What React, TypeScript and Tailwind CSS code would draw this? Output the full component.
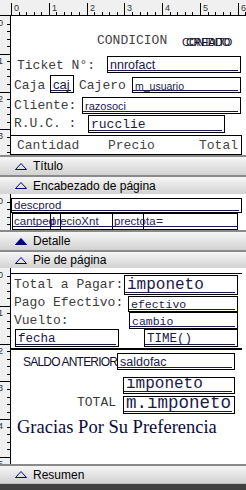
import React from 'react';

const INCH = 37.8;

const mono = "font-['Liberation_Mono',monospace]";
const sans = "font-['Liberation_Sans',Arial,sans-serif]";

const TopRuler = () => {
  const marks: React.ReactNode[] = [];
  for (let i = 0; i < 7; i++) {
    const x = Math.round(11 + i * INCH);
    marks.push(<line key={`m${i}`} x1={x + 0.5} y1={3} x2={x + 0.5} y2={15} stroke="#000" />);
    marks.push(
      <text key={`t${i}`} x={x + 3} y={11} fontSize={9} fill="#333" fontFamily="Liberation Sans, sans-serif">
        {i}
      </text>
    );
    for (let k = 1; k < 5; k++) {
      const xx = Math.round(11 + i * INCH + (k * INCH) / 5) + 0.5;
      marks.push(<line key={`k${i}-${k}`} x1={xx} y1={12} x2={xx} y2={15} stroke="#000" />);
    }
  }
  return (
    <svg width={246} height={16} className="block bg-[#f0f0f0]">
      {marks}
      <line x1={0} y1={15.5} x2={246} y2={15.5} stroke="#000" />
    </svg>
  );
};

const LeftRuler = ({ height }: { height: number }) => {
  const marks: React.ReactNode[] = [];
  for (let i = 0; i * INCH < height; i++) {
    const y = Math.round(i * INCH);
    if (i > 0) marks.push(<line key={`m${i}`} x1={0} y1={y + 0.5} x2={10} y2={y + 0.5} stroke="#000" />);
    marks.push(
      <text key={`t${i}`} x={-2} y={y + 10} fontSize={9} fill="#333" fontFamily="Liberation Sans, sans-serif">
        {i}
      </text>
    );
    for (let k = 1; k < 5; k++) {
      const yy = Math.round(i * INCH + (k * INCH) / 5) + 0.5;
      marks.push(<line key={`k${i}-${k}`} x1={7} y1={yy} x2={10} y2={yy} stroke="#000" />);
    }
  }
  return (
    <svg width={11} height={height} className="block shrink-0 bg-[#f0f0f0]">
      {marks}
      <line x1={10.5} y1={0} x2={10.5} y2={height} stroke="#000" />
    </svg>
  );
};

const BandBar = ({ label, filled, className }: { label: string; filled?: boolean; className: string }) => (
  <div
    className={`flex items-center gap-[6px] pl-[15px] border-t-2 border-[#8a8a8a] bg-linear-to-b from-[#f6f6f6] to-[#d2d2d2] ${className}`}
  >
    <svg width={12} height={7} className="block">
      <polygon
        points="6,0.5 11.5,6.5 0.5,6.5"
        fill={filled ? '#000080' : 'none'}
        stroke="#000080"
        strokeWidth={1}
      />
    </svg>
    <span className={`${sans} text-[12px] leading-none text-black`}>{label}</span>
  </div>
);

// report field: framed box with the expression name and its underline
const Field = ({ className, text, textClass }: { className: string; text: string; textClass: string }) => (
  <div className={`absolute border border-black overflow-hidden ${className}`}>
    <span className={`absolute left-[2px] bottom-[1px] leading-none whitespace-nowrap text-[#1a1a4a] ${textClass}`}>
      {text}
    </span>
    <div className="absolute left-0 right-[2px] bottom-[1px] h-px bg-[#1a1a4a]" />
  </div>
);

const Label = ({ className, children }: { className: string; children: React.ReactNode }) => (
  <span className={`absolute leading-none whitespace-nowrap ${className}`}>{children}</span>
);

export default function App() {
  return (
    <div className="w-[246px] h-[490px] overflow-hidden flex flex-col bg-white select-none">
      <TopRuler />

      {/* Título band */}
      <div className="flex h-[139px]">
        <LeftRuler height={139} />
        <div className="relative flex-1 bg-white">
          <Label className={`${mono} text-[13px] text-[#444] left-[86px] top-[18px]`}>CONDICION</Label>
          <Label className={`${sans} text-[11px] tracking-[-1px] text-[#101030] left-[171px] top-[21px]`}>CONTADO</Label>
          <Label className={`${sans} text-[11px] tracking-[-0.5px] text-[#101030] left-[175px] top-[21px]`}>CREDITO</Label>

          <Label className={`${mono} text-[13px] text-[#3c3c3c] left-[6px] top-[43px]`}>Ticket N°:</Label>
          <Field className="left-[96px] top-[40px] w-[134px] h-[17px]" text="nnrofact" textClass={`${sans} text-[12.5px]`} />

          <Label className={`${mono} text-[13px] text-[#3c3c3c] left-[3px] top-[63px]`}>Caja</Label>
          <Field className="left-[39px] top-[59px] w-[24px] h-[18px]" text="caj" textClass={`${sans} text-[13px]`} />
          <Label className={`${mono} text-[13px] text-[#3c3c3c] left-[68px] top-[63px]`}>Cajero</Label>
          <Field className="left-[121px] top-[61px] w-[109px] h-[16px]" text="m_usuario" textClass={`${sans} text-[10.5px]`} />

          <Label className={`${mono} text-[13px] text-[#3c3c3c] left-[3px] top-[83px]`}>Cliente:</Label>
          <Field className="left-[71px] top-[81px] w-[159px] h-[17px]" text="razosoci" textClass={`${sans} text-[11px]`} />

          <Label className={`${mono} text-[13px] text-[#3c3c3c] left-[3px] top-[101px]`}>R.U.C. :</Label>
          <Field className="left-[77px] top-[99px] w-[137px] h-[18px]" text="rucclie" textClass={`${mono} text-[13px]`} />

          <div className="absolute left-0 top-[119px] w-[231px] h-[20px] border-t border-r border-b border-black" />
          <Label className={`${mono} text-[13px] text-[#444] left-[6px] top-[123px]`}>Cantidad</Label>
          <Label className={`${mono} text-[13px] text-[#444] left-[97px] top-[123px]`}>Precio</Label>
          <Label className={`${mono} text-[13px] text-[#444] left-[188px] top-[123px]`}>Total</Label>
        </div>
      </div>

      <BandBar label="Título" className="h-[20px]" />
      <BandBar label="Encabezado de página" className="h-[19px]" />

      {/* Detalle band */}
      <div className="flex h-[36px]">
        <LeftRuler height={36} />
        <div className="relative flex-1 bg-white">
          <Field className="left-0 top-[4px] w-[231px] h-[15px]" text="descprod" textClass={`${sans} text-[11.5px]`} />
          <div className="absolute left-[1px] top-[19px] w-[39px] h-[17px] border border-black" />
          <div className="absolute left-[39px] top-[19px] w-[11px] h-[17px] border border-black" />
          <div className="absolute left-[49px] top-[19px] w-[53px] h-[17px] border border-black" />
          <div className="absolute left-[101px] top-[19px] w-[32px] h-[17px] border border-black" />
          <div className="absolute left-[132px] top-[19px] w-[95px] h-[17px] border border-black" />
          <div className="absolute left-[2px] right-[8px] top-[32px] h-px bg-[#1a1a4a]" />
          <Label className={`${sans} text-[11.5px] text-[#2a1a5a] left-[3px] top-[22px]`}>cantped</Label>
          <Label className={`${sans} text-[11.5px] text-[#2a1a5a] left-[39px] top-[22px]`}>precioXnt</Label>
          <Label className={`${sans} text-[11.5px] text-[#2a1a5a] left-[103px] top-[22px]`}>prectota</Label>
          <Label className={`${sans} text-[12px] text-[#2a1a5a] left-[145px] top-[21px]`}>=</Label>
        </div>
      </div>

      <BandBar label="Detalle" filled className="h-[20px]" />
      <BandBar label="Pie de página" className="h-[18px]" />

      {/* Pie de página band */}
      <div className="flex h-[196px]">
        <LeftRuler height={196} />
        <div className="relative flex-1 bg-white">
          <div className="absolute left-0 top-[5px] w-[231px] h-px bg-black" />

          <Label className={`${mono} text-[13px] text-[#3c3c3c] left-[3px] top-[10px]`}>Total a Pagar:</Label>
          <Field className="left-[113px] top-[7px] w-[114px] h-[20px]" text="imponeto" textClass={`${mono} text-[16px]`} />

          <Label className={`${mono} text-[13px] text-[#3c3c3c] left-[3px] top-[28px]`}>Pago Efectivo:</Label>
          <Field className="left-[117px] top-[28px] w-[110px] h-[16px]" text="efectivo" textClass={`${mono} text-[11.5px]`} />

          <Label className={`${mono} text-[13px] text-[#3c3c3c] left-[3px] top-[46px]`}>Vuelto:</Label>
          <Field className="left-[118px] top-[44px] w-[109px] h-[17px]" text="cambio" textClass={`${mono} text-[11.5px]`} />

          <Field className="left-[4px] top-[61px] w-[104px] h-[18px]" text="fecha" textClass={`${mono} text-[12.5px]`} />
          <Field className="left-[133px] top-[61px] w-[94px] h-[18px]" text="TIME()" textClass={`${mono} text-[12.5px]`} />

          <div className="absolute left-0 top-[80px] w-[231px] h-[2px] bg-black" />

          <Label className={`${sans} text-[12px] tracking-[-0.8px] text-[#101030] left-[12px] top-[88px]`}>SALDO ANTERIOR</Label>
          <Field className="left-[106px] top-[85px] w-[118px] h-[17px]" text="saldofac" textClass={`${sans} text-[12.5px]`} />

          <Field className="left-[112px] top-[109px] w-[112px] h-[17px]" text="imponeto" textClass={`${mono} text-[16px]`} />

          <Label className={`${mono} text-[13px] text-[#3c3c3c] left-[66px] top-[128px]`}>TOTAL</Label>
          <Field className="left-[112px] top-[128px] w-[112px] h-[18px]" text="m.imponeto" textClass={`${mono} text-[17.5px]`} />

          <Label className="font-['Liberation_Serif',serif] text-[18.5px] text-[#0a0a3a] left-[6px] top-[150px]">
            Gracias Por Su Preferencia
          </Label>
        </div>
      </div>

      <BandBar label="Resumen" className="h-[19px]" />
      <div className="flex-1 border-t border-[#bdbdbd] bg-[#404040]" />
    </div>
  );
}
